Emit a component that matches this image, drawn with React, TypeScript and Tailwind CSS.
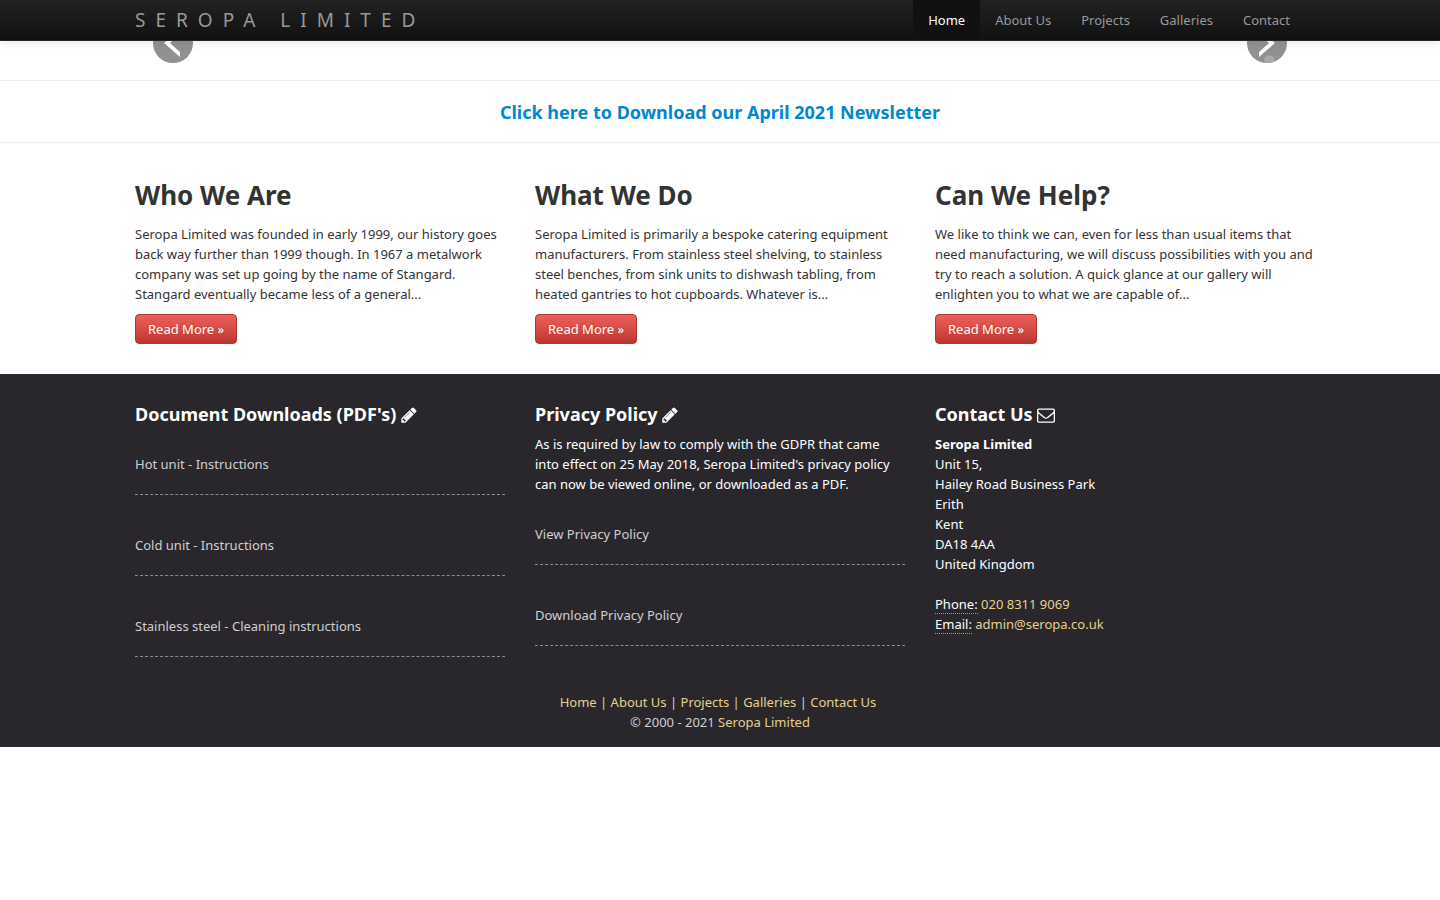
import type { ReactNode } from 'react';

interface Teaser {
  title: string;
  text: string;
}

const navItems = ['Home', 'About Us', 'Projects', 'Galleries', 'Contact'];

// Line breaks are kept on wide screens only
const teasers: Teaser[] = [
  {
    title: 'Who We Are',
    text: `Seropa Limited was founded in early 1999, our history goes
back way further than 1999 though. In 1967 a metalwork
company was set up going by the name of Stangard.
Stangard eventually became less of a general...`,
  },
  {
    title: 'What We Do',
    text: `Seropa Limited is primarily a bespoke catering equipment
manufacturers. From stainless steel shelving, to stainless
steel benches, from sink units to dishwash tabling, from
heated gantries to hot cupboards. Whatever is...`,
  },
  {
    title: 'Can We Help?',
    text: `We like to think we can, even for less than usual items that
need manufacturing, we will discuss possibilities with you and
try to reach a solution. A quick glance at our gallery will
enlighten you to what we are capable of...`,
  },
];

const downloads = ['Hot unit - Instructions', 'Cold unit - Instructions', 'Stainless steel - Cleaning instructions'];
const policies = ['View Privacy Policy', 'Download Privacy Policy'];
const address = ['Unit 15,', 'Hailey Road Business Park', 'Erith', 'Kent', 'DA18 4AA', 'United Kingdom'];
const footerLinks = ['Home', 'About Us', 'Projects', 'Galleries', 'Contact Us'];

const PencilIcon = () => (
  <svg className="inline-block h-[18px] w-4 align-[-3px]" viewBox="0 0 1536 1792" fill="currentColor" aria-hidden="true">
    <path d="M363 1536l91-91-235-235-91 91v107h128v128h107zm523-928q0-22-22-22-10 0-17 7l-542 542q-7 7-7 17 0 22 22 22 10 0 17-7l542-542q7-7 7-17zm-54-192l416 416-832 832h-416v-416zm683 96q0 53-37 90l-166 166-416-416 166-165q36-38 90-38 53 0 91 38l235 234q37 39 37 91z" />
  </svg>
);

const EnvelopeIcon = () => (
  <svg className="inline-block size-[18px] align-[-3px]" viewBox="0 0 1792 1792" fill="currentColor" aria-hidden="true">
    <path d="M1664 1504v-768q-32 36-69 66-268 206-426 338-51 43-83 67t-86.5 48.5-102.5 24.5h-2q-48 0-102.5-24.5t-86.5-48.5-83-67q-158-132-426-338-37-30-69-66v768q0 13 9.5 22.5t22.5 9.5h1472q13 0 22.5-9.5t9.5-22.5zm0-1051v-24.5l-.5-13-3-12.5-5.5-9-9-7.5-14-2.5h-1472q-13 0-22.5 9.5t-9.5 22.5q0 168 147 284 193 152 401 317 6 5 35 29.5t46 37.5 44.5 31.5 50.5 27.5 43 9h2q20 0 43-9t50.5-27.5 44.5-31.5 46-37.5 35-29.5q208-165 401-317 54-43 100.5-115.5t46.5-131.5zm128-37v1088q0 66-47 113t-113 47h-1472q-66 0-113-47t-47-113v-1088q0-66 47-113t113-47h1472q66 0 113 47t47 113z" />
  </svg>
);

const Container = ({ children }: { children: ReactNode }) => (
  <div className="mx-auto w-full max-w-[1170px]">{children}</div>
);

const FooterHeading = ({ children }: { children: ReactNode }) => (
  <h3 className="text-lg leading-10 font-bold whitespace-nowrap">{children}</h3>
);

const LinkList = ({ items }: { items: string[] }) => (
  <ul>
    {items.map(item => (
      <li key={item} className="mb-5 border-b border-dashed border-[#8c8b8e] py-5">
        <a href="#" className="text-[#d0cfd2]">{item}</a>
      </li>
    ))}
  </ul>
);

const App = () => {
  return (
    <div className="font-['Noto_Sans',sans-serif] text-[13px] leading-5 text-[#333]">
      <header className="sticky top-0 z-10 border-b border-[#252525] bg-linear-to-b from-[#222] to-[#111] shadow-[0_1px_10px_rgba(0,0,0,0.1)]">
        <Container>
          <div className="flex items-center justify-between">
            <a href="#" className="text-[19px] leading-10 tracking-[10px] text-[#999]">SEROPA LIMITED</a>
            <nav className="flex">
              {navItems.map((item, i) => (
                <a
                  key={item}
                  href="#"
                  className={i === 0 ? 'bg-[#111] px-[15px] py-[10px] text-white' : 'px-[15px] py-[10px] text-[#999]'}
                >
                  {item}
                </a>
              ))}
            </nav>
          </div>
        </Container>
      </header>

      {/* Carousel controls */}
      <section className="border-b border-[#eee]">
        <Container>
          <div className="relative h-[39px]">
            <button type="button" aria-label="Previous slide" className="absolute bottom-[17px] left-[18px] size-10">
              <svg viewBox="0 0 40 40">
                <circle cx="20" cy="20" r="20" fill="#919191" />
                <path d="M25 8V13L17 20L27 29V34L11 20Z" fill="#fff" />
              </svg>
            </button>
            <button type="button" aria-label="Next slide" className="absolute right-[18px] bottom-[17px] size-10">
              <svg viewBox="0 0 40 40">
                <circle cx="20" cy="20" r="20" fill="#919191" />
                <path d="M18 39.900a5 5 0 1 1 9 -1.200A20 20 0 0 1 18 39.900Z" fill="#a9a9a9" />
                <path d="M14 8V13L22 20L12 29V34L28 20Z" fill="#fff" />
              </svg>
            </button>
          </div>
        </Container>
      </section>

      <section className="border-b border-[#eee] pt-[11px] pb-[10px] text-center">
        <h3 className="text-lg leading-10 font-bold">
          <a href="#" className="text-[#0088cc]">Click here to Download our April 2021 Newsletter</a>
        </h3>
      </section>

      <main className="pt-8 pb-[30px]">
        <Container>
          <div className="grid grid-cols-3 gap-[30px]">
            {teasers.map(({ title, text }) => (
              <article key={title}>
                <h2 className="mb-[9px] text-[26px] leading-10 font-bold">{title}</h2>
                <p className="mb-[10px] xl:whitespace-pre">{text}</p>
                <a
                  href="#"
                  className="inline-block rounded border border-[#b33630] bg-linear-to-b from-[#ee5f5b] to-[#bd362f] px-3 py-1 text-white"
                >
                  Read More »
                </a>
              </article>
            ))}
          </div>
        </Container>
      </main>

      <footer className="bg-[#29272c] pt-5 pb-[15px] text-white">
        <Container>
          <div className="grid grid-cols-3 gap-[30px]">
            <div>
              <FooterHeading>Document Downloads (PDF's) <PencilIcon /></FooterHeading>
              <LinkList items={downloads} />
            </div>
            <div>
              <FooterHeading>Privacy Policy <PencilIcon /></FooterHeading>
              <p className="mb-[10px]">
                As is required by law to comply with the GDPR that came into effect on 25 May 2018, Seropa Limited's privacy policy can now be viewed online, or downloaded as a PDF.
              </p>
              <LinkList items={policies} />
            </div>
            <div>
              <FooterHeading>Contact Us <EnvelopeIcon /></FooterHeading>
              <address className="not-italic">
                <strong>Seropa Limited</strong>
                {address.map(line => <div key={line}>{line}</div>)}
                <div className="mt-5">
                  <abbr className="border-b border-dotted border-[#999] no-underline">Phone:</abbr>{' '}
                  <a href="#" className="text-[#e6d08f]">020 8311 9069</a>
                </div>
                <div>
                  <abbr className="border-b border-dotted border-[#999] no-underline">Email:</abbr>{' '}
                  <a href="#" className="text-[#e6d08f]">admin@seropa.co.uk</a>
                </div>
              </address>
            </div>
          </div>
          <div className="mt-[15px] text-center text-[#d0cfd2]">
            <p className="pr-1">
              {footerLinks.map((item, i) => (
                <span key={item}>
                  {i > 0 && ' | '}
                  <a href="#" className="text-[#e6d08f]">{item}</a>
                </span>
              ))}
            </p>
            <p>© 2000 - 2021 <a href="#" className="text-[#e6d08f]">Seropa Limited</a></p>
          </div>
        </Container>
      </footer>
    </div>
  );
};

export default App;
